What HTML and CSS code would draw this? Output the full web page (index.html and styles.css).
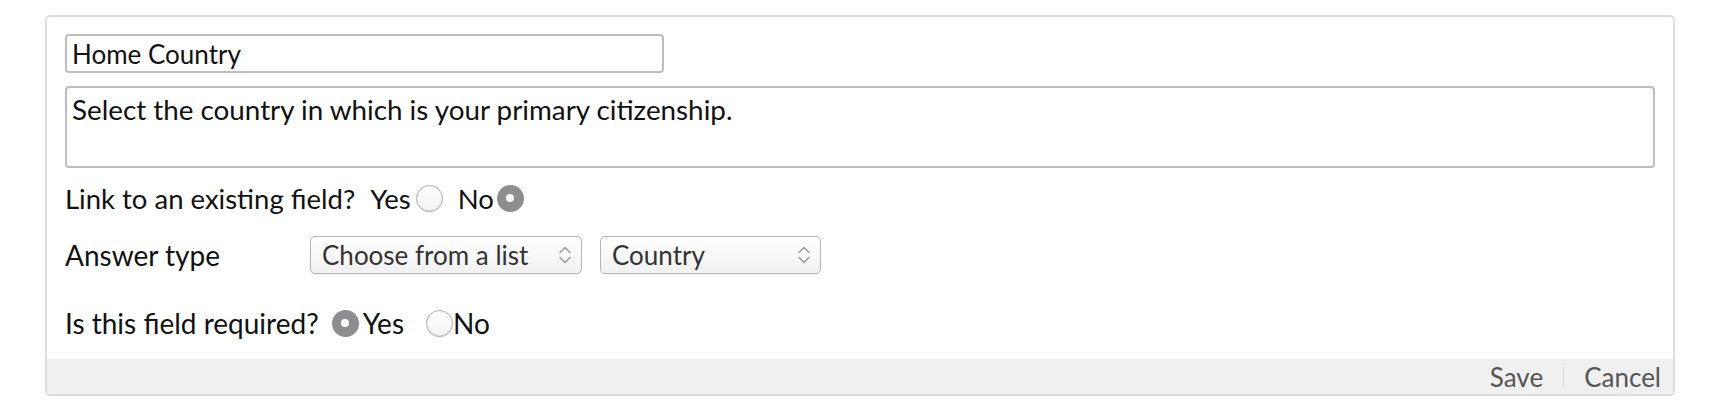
FILE: index.html
```html
<!DOCTYPE html>
<html>
<head>
<meta charset="utf-8">
<link rel="stylesheet" href="styles.css">
</head>
<body>
<div class="card">
  <div class="card-body">
    <input class="title-input" type="text" value="Home Country">
    <textarea class="desc">Select the country in which is your primary citizenship.</textarea>
    <div class="row link-row">
      <span class="label">Link to an existing field?</span>
      <label class="opt opt-yes1"><span>Yes</span><span class="radio"></span></label>
      <label class="opt opt-no1"><span>No</span><span class="radio checked"></span></label>
    </div>
    <div class="row answer-row">
      <span class="label col">Answer type</span>
      <div class="select sel1"><span>Choose from a list</span><svg class="chev" viewBox="0 0 12 20" width="12" height="20"><path d="M1 7.5 L6 2.5 L11 7.5 M1 12.5 L6 17.5 L11 12.5" fill="none" stroke="#9a9a9a" stroke-width="1.5" stroke-linecap="round" stroke-linejoin="round"/></svg></div>
      <div class="select sel2"><span>Country</span><svg class="chev" viewBox="0 0 12 20" width="12" height="20"><path d="M1 7.5 L6 2.5 L11 7.5 M1 12.5 L6 17.5 L11 12.5" fill="none" stroke="#9a9a9a" stroke-width="1.5" stroke-linecap="round" stroke-linejoin="round"/></svg></div>
    </div>
    <div class="row req-row">
      <span class="label">Is this field required?</span>
      <label class="opt opt-yes2"><span class="radio checked"></span><span>Yes</span></label>
      <label class="opt opt-no2"><span class="radio"></span><span>No</span></label>
    </div>
  </div>
  <div class="card-footer">
    <span class="action">Save</span>
    <span class="divider"></span>
    <span class="action">Cancel</span>
  </div>
</div>
</body>
</html>
```

FILE: styles.css
```css
html, body {
  margin: 0;
  padding: 0;
  background: #ffffff;
}
body {
  padding: 15px 45px 20px 45px;
  font-family: Lato, "Open Sans", "Liberation Sans", sans-serif;
  font-size: 27.5px;
  color: #111111;
}
.card {
  border: 2px solid #dddddd;
  border-radius: 5px;
  overflow: hidden;
  background: #ffffff;
}
.card-body {
  padding: 17px 18px 21px 18px;
  display: flex;
  flex-direction: column;
}
.title-input {
  box-sizing: border-box;
  width: 599px;
  height: 39px;
  border: 2px solid #bdbdbd;
  border-radius: 4px;
  padding: 0 0 0 5px;
  font-family: inherit;
  font-size: 26px;
  color: #111111;
  outline: none;
  background: #fff;
}
.desc {
  box-sizing: border-box;
  margin-top: 13px;
  width: 100%;
  height: 82px;
  border: 2px solid #bdbdbd;
  border-radius: 4px;
  padding: 6px 5px;
  font-family: inherit;
  font-size: 27.8px;
  line-height: 32px;
  color: #111111;
  resize: none;
  outline: none;
  background: #fff;
}
.row {
  display: flex;
  align-items: center;
}
.link-row {
  margin-top: 15px;
  height: 30px;
}
.answer-row {
  margin-top: 23px;
  height: 38px;
}
.req-row {
  margin-top: 34px;
  height: 30px;
  font-size: 28px;
}
.label.col {
  width: 245px;
  font-size: 28px;
}
.opt {
  display: flex;
  align-items: center;
}
.opt-yes1 { margin-left: 15px; gap: 5px; }
.opt-no1 { margin-left: 15px; gap: 3px; }
.opt-yes2 { margin-left: 13px; gap: 4px; }
.opt-no2 { margin-left: 22px; gap: 0px; }
.radio {
  box-sizing: border-box;
  width: 27px;
  height: 27px;
  border-radius: 50%;
  border: 1px solid #acacac;
  background: linear-gradient(#ffffff, #f3f3f3);
  box-shadow: inset 0 -1px 1px rgba(0,0,0,0.06), 0 1px 1px rgba(0,0,0,0.08);
  display: flex;
  align-items: center;
  justify-content: center;
}
.radio.checked {
  border: none;
  background: #8e8e91;
  box-shadow: none;
}
.radio.checked::after {
  content: "";
  width: 8px;
  height: 8px;
  border-radius: 50%;
  background: #ffffff;
}
.select {
  box-sizing: border-box;
  height: 38px;
  border: 1px solid #b4b4b4;
  border-radius: 5px;
  background: linear-gradient(#ffffff, #f1f1f1);
  box-shadow: 0 1px 1px rgba(0,0,0,0.06);
  display: flex;
  align-items: center;
  justify-content: space-between;
  padding: 0 10px 0 11px;
  color: #333333;
  font-size: 26px;
}
.sel1 { width: 272px; }
.sel2 { width: 221px; margin-left: 18px; }
.chev { flex: none; }
.card-footer {
  background: #f0f0f0;
  height: 35px;
  display: flex;
  justify-content: flex-end;
  align-items: center;
  padding-right: 12px;
  color: #555555;
  font-size: 26px;
}
.divider {
  width: 1px;
  height: 20px;
  background: #d4d4d4;
  margin: 0 20px 0 20px;
}
```
